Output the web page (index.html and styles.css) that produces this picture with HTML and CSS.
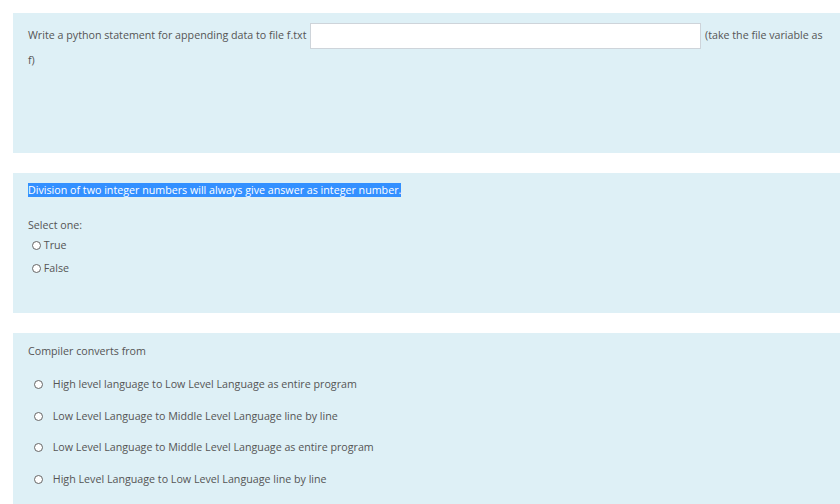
FILE: index.html
```html
<!DOCTYPE html>
<html lang="en">
<head>
    <meta charset="UTF-8">
    <meta name="viewport" content="width=device-width, initial-scale=1.0">
    <title>Quiz</title>
    <link rel="stylesheet" href="styles.css">
</head>
<body>
    <main class="quiz">
        <!-- Question 1: fill in the blank -->
        <section class="question q-blank">
            <p class="qtext">Write a python statement for appending data to file f.txt <input type="text" class="answer-box"> (take the file variable as f)</p>
        </section>

        <!-- Question 2: true / false -->
        <section class="question q-truefalse">
            <p class="qtext"><span class="selected">Division of two integer numbers will always give answer as integer number.</span></p>
            <p class="prompt">Select one:</p>
            <label class="tf-option"><input type="radio" name="q2"> True</label>
            <label class="tf-option"><input type="radio" name="q2"> False</label>
        </section>

        <!-- Question 3: multiple choice -->
        <section class="question q-choice">
            <p class="qtext">Compiler converts from</p>
            <label class="mc-option"><input type="radio" name="q3"> High level language to Low Level Language as entire program</label>
            <label class="mc-option"><input type="radio" name="q3"> Low Level Language to Middle Level Language line by line</label>
            <label class="mc-option"><input type="radio" name="q3"> Low Level Language to Middle Level Language as entire program</label>
            <label class="mc-option"><input type="radio" name="q3"> High Level Language to Low Level Language line by line</label>
        </section>
    </main>
</body>
</html>
```

FILE: styles.css
```css
body {
    margin: 0;
    padding: 13px 0 0 13px;
    font-family: "Open Sans", Arial, sans-serif;
    font-size: 10.7px;
    color: #555;
    background: #fff;
    overflow: hidden;
}

.question {
    background: #def0f6;
    padding: 0 15px;
    margin-bottom: 20px;
    height: 140px;
    box-sizing: border-box;
}

p {
    margin: 0;
}

input[type="radio"] {
    appearance: none;
    -webkit-appearance: none;
    width: 9px;
    height: 9px;
    margin: 0;
    border: 1px solid #666;
    border-radius: 50%;
    background: #fff;
    vertical-align: -1px;
}

/* Question 1 */
.q-blank {
    padding-top: 10px;
}

.q-blank .qtext {
    line-height: 23px;
}

.answer-box {
    width: 391px;
    height: 26px;
    box-sizing: border-box;
    border: 1px solid #ced4da;
    background: #fff;
    vertical-align: middle;
    margin: 0 1px;
}

/* Question 2 */
.q-truefalse {
    padding-top: 10px;
}

.q-truefalse .qtext {
    line-height: 15px;
}

.selected {
    background: #3390ff;
    color: #fff;
}

.prompt {
    margin-top: 19px;
    line-height: 16px;
}

.tf-option {
    display: block;
    line-height: 23px;
    padding-left: 4px;
}

.tf-option:first-of-type {
    margin-top: 1px;
}

/* Question 3 */
.q-choice {
    padding-top: 10px;
    height: 171px;
    margin-bottom: 0;
}

.q-choice .qtext {
    line-height: 16px;
    margin-bottom: 10px;
}

.mc-option {
    display: block;
    line-height: 31.5px;
    padding-left: 6px;
}

.mc-option input {
    margin-right: 7px;
}
```
